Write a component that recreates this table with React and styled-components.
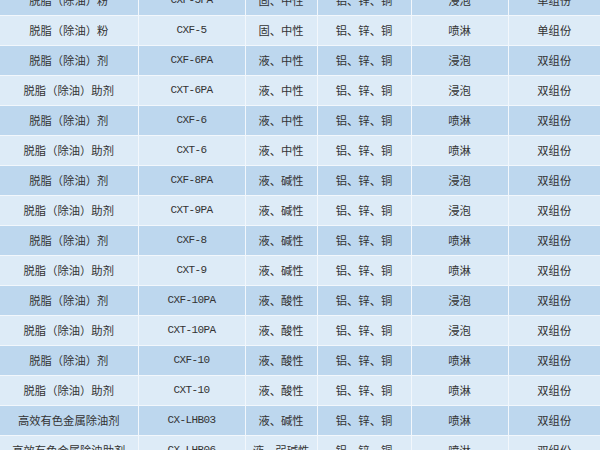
import React from 'react';
import styled, { createGlobalStyle } from 'styled-components';

const columns = [138, 107, 72, 94, 97, 92];

const rows = [
  ['脱脂（除油）粉', 'CXF-5PA', '固、中性', '铝、锌、铜', '浸泡', '单组份'],
  ['脱脂（除油）粉', 'CXF-5', '固、中性', '铝、锌、铜', '喷淋', '单组份'],
  ['脱脂（除油）剂', 'CXF-6PA', '液、中性', '铝、锌、铜', '浸泡', '双组份'],
  ['脱脂（除油）助剂', 'CXT-6PA', '液、中性', '铝、锌、铜', '浸泡', '双组份'],
  ['脱脂（除油）剂', 'CXF-6', '液、中性', '铝、锌、铜', '喷淋', '双组份'],
  ['脱脂（除油）助剂', 'CXT-6', '液、中性', '铝、锌、铜', '喷淋', '双组份'],
  ['脱脂（除油）剂', 'CXF-8PA', '液、碱性', '铝、锌、铜', '浸泡', '双组份'],
  ['脱脂（除油）助剂', 'CXT-9PA', '液、碱性', '铝、锌、铜', '浸泡', '双组份'],
  ['脱脂（除油）剂', 'CXF-8', '液、碱性', '铝、锌、铜', '喷淋', '双组份'],
  ['脱脂（除油）助剂', 'CXT-9', '液、碱性', '铝、锌、铜', '喷淋', '双组份'],
  ['脱脂（除油）剂', 'CXF-10PA', '液、酸性', '铝、锌、铜', '浸泡', '双组份'],
  ['脱脂（除油）助剂', 'CXT-10PA', '液、酸性', '铝、锌、铜', '浸泡', '双组份'],
  ['脱脂（除油）剂', 'CXF-10', '液、酸性', '铝、锌、铜', '喷淋', '双组份'],
  ['脱脂（除油）助剂', 'CXT-10', '液、酸性', '铝、锌、铜', '喷淋', '双组份'],
  ['高效有色金属除油剂', 'CX-LHB03', '液、碱性', '铝、锌、铜', '喷淋', '双组份'],
  ['高效有色金属除油助剂', 'CX-LHB06', '液、弱碱性', '铝、锌、铜', '喷淋', '双组份'],
];

const GlobalStyle = createGlobalStyle`
  html, body {
    margin: 0;
    padding: 0;
    background: #ffffff;
    overflow: hidden;
  }
`;

const Page = styled.div`
  width: 600px;
  height: 450px;
  overflow: hidden;
`;

const Table = styled.table`
  width: 600px;
  margin-top: -15px;
  border-collapse: collapse;
  table-layout: fixed;
`;

const Row = styled.tr`
  height: 30px;
  background: ${(p) => (p.$shade ? '#bdd7ee' : '#ddebf7')};
  border-bottom: 1px solid #f2f7fc;
`;

const Cell = styled.td`
  padding: 0;
  text-align: center;
  vertical-align: middle;
  color: #333333;
  font-family: ${(p) => (p.$code ? '"Liberation Mono", monospace' : '"Noto Sans CJK SC", sans-serif')};
  font-size: ${(p) => (p.$code ? '11px' : '11.3px')};
  letter-spacing: ${(p) => (p.$code ? '-0.6px' : '0')};
  white-space: nowrap;
  border-right: 1px solid #f2f7fc;

  &:last-child {
    border-right: none;
  }
`;

export default function App() {
  return (
    <Page>
      <GlobalStyle />
      <Table>
        <colgroup>
          {columns.map((w, i) => (
            <col key={i} style={{ width: w }} />
          ))}
        </colgroup>
        <tbody>
          {rows.map((row, i) => (
            <Row key={i} $shade={i % 2 === 0}>
              {row.map((text, j) => (
                <Cell key={j} $code={j === 1}>
                  {text}
                </Cell>
              ))}
            </Row>
          ))}
        </tbody>
      </Table>
    </Page>
  );
}
